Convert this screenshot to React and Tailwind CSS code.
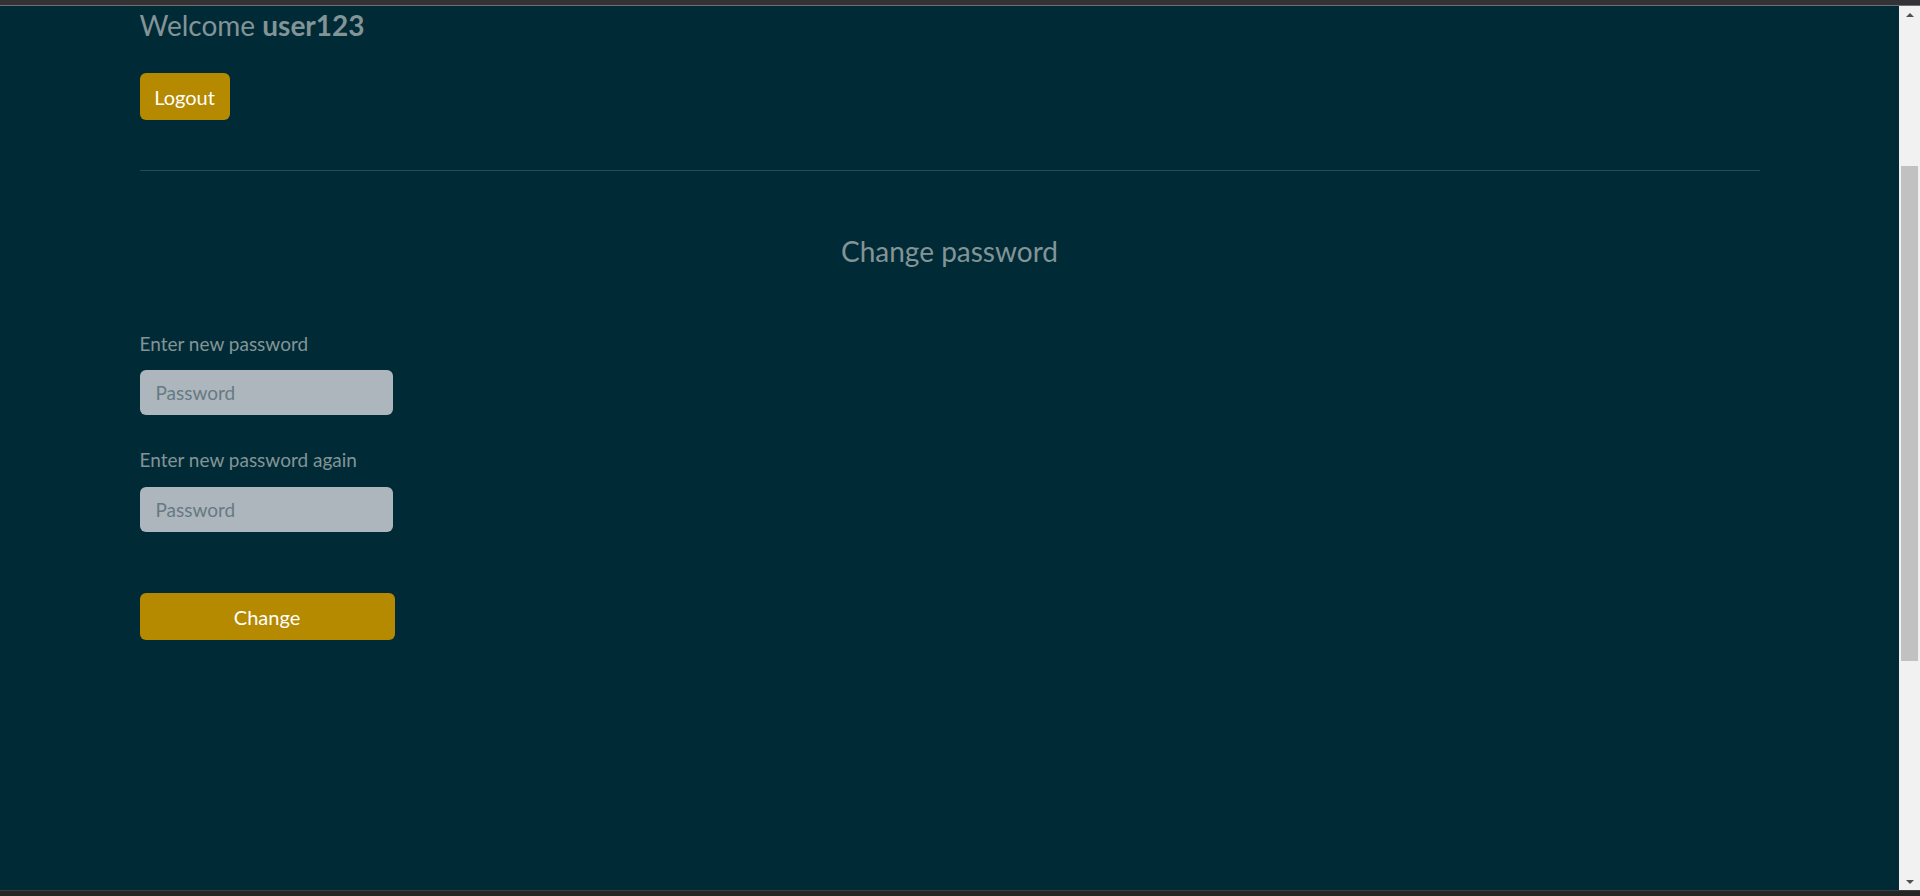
export default function App() {
  return (
    <div className="flex h-[896px] w-[1920px] flex-col overflow-hidden bg-[#002b36] font-['Lato','Liberation_Sans',sans-serif] text-[#839496]">
      <div className="h-[6px] shrink-0 border-b border-[#6e6e70] bg-[#333336]" />

      <div className="flex min-h-0 flex-1">
        <main className="flex-1">
          <div className="mx-auto w-[1620px]">
            <h2 className="pt-[1px] text-[28px] leading-[36px]">
              Welcome <span className="font-bold">user123</span>
            </h2>

            <button className="mt-[30px] h-[47px] w-[90px] rounded-[6px] bg-[#b58900] text-[20px] text-white">
              Logout
            </button>

            <hr className="mt-[50px] border-t border-[#2a4a52]" />

            <h4 className="mt-[62px] text-center text-[28px] leading-[36px]">Change password</h4>

            <form className="mt-[60px] flex w-[255px] flex-col">
              <label className="text-[19px] leading-[30px]">Enter new password</label>
              <input
                type="password"
                placeholder="Password"
                className="mt-[11px] h-[45px] w-[253px] rounded-[6px] bg-[#adb5bd] px-[16px] text-[19px] text-[#073642] placeholder:text-[#657b83] outline-none"
              />

              <label className="mt-[30px] text-[19px] leading-[30px]">Enter new password again</label>
              <input
                type="password"
                placeholder="Password"
                className="mt-[12px] h-[45px] w-[253px] rounded-[6px] bg-[#adb5bd] px-[16px] text-[19px] text-[#073642] placeholder:text-[#657b83] outline-none"
              />

              <button
                type="button"
                className="mt-[61px] h-[47px] w-[255px] rounded-[6px] bg-[#b58900] text-[20px] text-white"
              >
                Change
              </button>
            </form>
          </div>
        </main>

        {/* fake scrollbar from the screenshot */}
        <div className="flex w-[21px] shrink-0 flex-col items-center bg-[#f1f1f1]">
          <div className="flex h-[17px] items-center justify-center">
            <div className="h-0 w-0 border-x-[4px] border-b-[4px] border-x-transparent border-b-[#505050]" />
          </div>
          <div className="mt-[143px] h-[495px] w-[17px] bg-[#c1c1c1]" />
          <div className="flex-1" />
          <div className="flex h-[17px] items-center justify-center">
            <div className="h-0 w-0 border-x-[4px] border-t-[4px] border-x-transparent border-t-[#505050]" />
          </div>
        </div>
      </div>

      <div className="h-[6px] shrink-0 border-t border-[#3e3e40] bg-[#252526]" />
    </div>
  );
}
